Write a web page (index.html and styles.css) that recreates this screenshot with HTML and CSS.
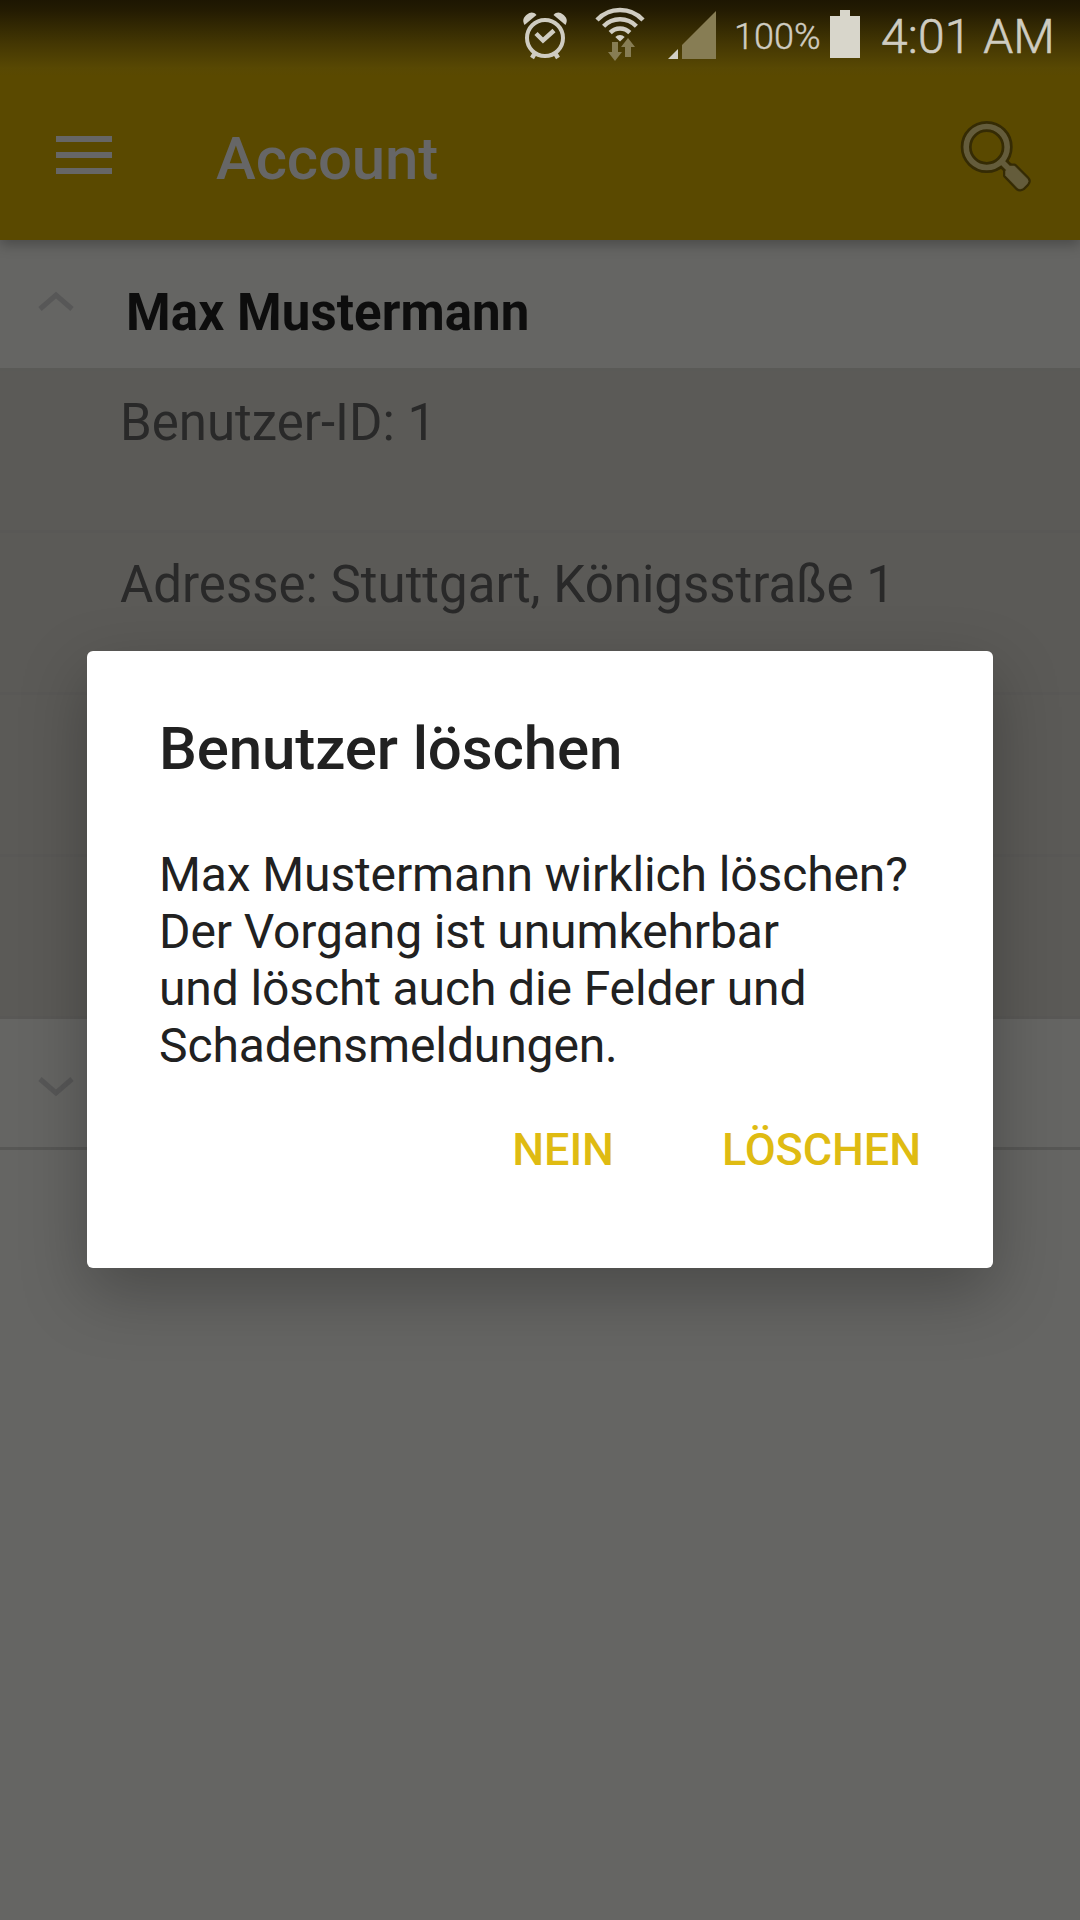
FILE: index.html
```html
<!DOCTYPE html>
<html lang="de">
<head>
<meta charset="utf-8">
<title>Account</title>
<link rel="stylesheet" href="styles.css">
</head>
<body>
<div class="screen">
  <header class="app-header">
    <div class="status-bar">
      <svg class="status-icons" width="220" height="64" viewBox="500 0 220 64">
        <g class="icon-line">
          <circle cx="545" cy="38" r="18" stroke-width="4"/>
          <path d="M536 33.500L543 40.500L554 30.500" stroke-width="4.500"/>
          <path d="M535 53l-3 5M555 53l3 5" stroke-width="4.500"/>
        </g>
        <g class="icon-fill">
          <path d="M524.500 25C522 20 523.500 17.500 527 14.500C530 12 533.500 11.500 536.500 15Z"/>
          <path d="M565.500 25C568 20 566.500 17.500 563 14.500C560 12 556.500 11.500 553.500 15Z"/>
          <path d="M620 41.500L615.300 37A6.500 6.500 0 0 1 624.700 37Z"/>
          <path d="M668 59L678 59L678 49Z"/>
        </g>
        <g class="icon-line" stroke-width="4.400">
          <path d="M597 20A31.500 31.500 0 0 1 643 20"/>
          <path d="M603.600 26.200A22.800 22.800 0 0 1 636.400 26.200"/>
          <path d="M610.200 32.600A13.800 13.800 0 0 1 629.800 32.600"/>
        </g>
        <g class="icon-dim">
          <path d="M612 42H618V52H622L615 61L608 52H612Z"/>
          <path d="M625 57H631V47H635L628 38L621 47H625Z"/>
          <path d="M682 59V45L716 11V59Z"/>
        </g>
      </svg>
      <span class="battery-level">100%</span>
      <svg class="battery" width="30" height="48" viewBox="0 0 30 48">
        <path d="M10 0H20V6H30V48H0V6H10Z"/>
      </svg>
      <span class="clock">4:01 AM</span>
    </div>
    <div class="toolbar">
      <div class="menu"><i></i><i></i><i></i></div>
      <h1 class="title">Account</h1>
      <svg class="search" width="72" height="72" viewBox="960 120 72 72">
        <g class="search-edge">
          <circle cx="986.700" cy="147" r="20.500" stroke-width="11"/>
          <path d="M1001 161L1011 171" stroke-width="11"/>
          <path class="handle" d="M1005.500 171L1010 166H1014.500L1027 178.500Q1029.500 181 1027 184L1023 188Q1020 190 1017.500 188L1005.500 175.500Z" stroke-width="5"/>
        </g>
        <g class="search-body">
          <circle cx="986.700" cy="147" r="20.500" stroke-width="5.600"/>
          <path d="M1002 162L1011 171" stroke-width="5.600"/>
          <path class="handle" d="M1005.500 171L1010 166H1014.500L1027 178.500Q1029.500 181 1027 184L1023 188Q1020 190 1017.500 188L1005.500 175.500Z" stroke-width=".5"/>
        </g>
      </svg>
    </div>
  </header>

  <main class="list">
    <section class="group">
      <svg class="chevron" width="40" height="24" viewBox="0 0 40 24"><path d="M4 19L20 5L36 19"/></svg>
      <h2 class="name">Max Mustermann</h2>
    </section>
    <div class="child">Benutzer-ID: 1</div>
    <div class="child">Adresse: Stuttgart, Königsstraße 1</div>
    <div class="child"></div>
    <div class="child"></div>
    <section class="group group-closed">
      <svg class="chevron" width="40" height="24" viewBox="0 0 40 24"><path d="M4 5L20 19L36 5"/></svg>
    </section>
  </main>

  <div class="overlay">
    <div class="dialog">
      <h2 class="dialog-title">Benutzer löschen</h2>
      <p class="message">Max Mustermann wirklich löschen?<br>Der Vorgang ist unumkehrbar<br>und löscht auch die Felder und<br>Schadensmeldungen.</p>
      <div class="actions"><span>NEIN</span><span>LÖSCHEN</span></div>
    </div>
  </div>
</div>
</body>
</html>
```

FILE: styles.css
```css
* { box-sizing: border-box; }
body { margin: 0; font-family: Roboto, sans-serif; }
h1, h2, p { margin: 0; }
svg { display: block; flex: none; }

.screen {
  position: relative;
  width: 1080px;
  height: 1920px;
  overflow: hidden;
  background: #656563;
}

.app-header {
  position: relative;
  height: 240px;
  background: linear-gradient(#1d1602 0, #231b02 10px, #443703 44px, #584803 68px, #5a4900 76px);
  box-shadow: 0 5px 12px rgba(0, 0, 0, .26);
}
.status-bar {
  display: flex;
  height: 72px;
  padding-left: 500px;
  color: #cfccc1;
  white-space: nowrap;
}
.icon-line { fill: none; stroke: #cfccc1; }
.icon-fill { fill: #d2cfc4; }
.icon-dim { fill: #877d54; }
.battery-level {
  width: 96px;
  margin-left: 14px;
  font-size: 36px;
  line-height: 42px;
  padding-top: 16px;
  font-weight: 300;
  -webkit-text-stroke: .4px #cfccc1;
}
.battery { margin-top: 10px; fill: #d8d6cb; }
.clock {
  margin-left: 21px;
  padding-top: 9px;
  font-size: 48px;
  line-height: 56px;
  font-weight: 300;
  letter-spacing: .1px;
  -webkit-text-stroke: .6px #cfccc1;
}
.toolbar {
  display: flex;
  height: 168px;
  padding: 48px 48px 0 56px;
}
.menu {
  display: flex;
  flex-direction: column;
  gap: 10px;
  width: 56px;
  padding-top: 16px;
}
.menu i { height: 6px; background: #666; }
.title {
  flex: 1;
  margin-left: 104px;
  padding-top: 4px;
  font-size: 60px;
  line-height: 70px;
  font-weight: 500;
  letter-spacing: -.15px;
  color: #666;
}
.search { overflow: visible; }
.search-edge, .search-body { fill: none; stroke: #352b04; }
.search-body { stroke: #645c3b; }
.handle { stroke-linejoin: round; }
.search-body .handle { fill: #645c3b; }

.group {
  display: flex;
  height: 131px;
  padding: 0 36px;
  border-bottom: 3px solid #5a5a57;
}
.group-closed { border-color: #575755; }
.chevron { margin-top: 50px; fill: none; stroke: #575757; stroke-width: 5; }
.group-closed .chevron { margin-top: 55px; }
.name {
  margin-left: 50px;
  padding-top: 43px;
  font-size: 51px;
  line-height: 60px;
  font-weight: 700;
  letter-spacing: .1px;
  color: #0d0d0d;
}
.child {
  height: 162px;
  padding: 22px 0 0 120px;
  background: #5b5a57;
  border-bottom: 3px solid #595856;
  font-size: 51px;
  line-height: 60px;
  color: #292929;
}

.overlay {
  position: absolute;
  inset: 0;
  padding: 651px 87px 0;
}
.dialog {
  height: 617px;
  padding: 63px 72px 0;
  border-radius: 6px;
  background: #fff;
  color: #212121;
  box-shadow: 0 24px 66px rgba(0, 0, 0, .27);
}
.dialog-title {
  font-size: 60px;
  line-height: 70px;
  font-weight: 500;
  letter-spacing: -.12px;
}
.message {
  margin-top: 62px;
  font-size: 48px;
  line-height: 57px;
  letter-spacing: -.12px;
  white-space: nowrap;
}
.actions {
  display: flex;
  justify-content: flex-end;
  gap: 108px;
  margin-top: 49px;
  font-size: 45px;
  line-height: 54px;
  font-weight: 500;
  letter-spacing: -.1px;
  color: #dfbb12;
}
```
